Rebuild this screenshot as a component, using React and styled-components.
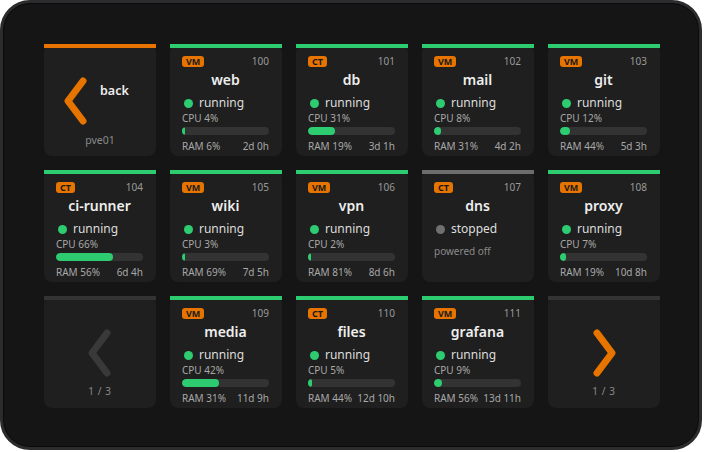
import React from 'react'
import styled, { createGlobalStyle } from 'styled-components'

const Global = createGlobalStyle`
  html, body { margin: 0; padding: 0; background: #ffffff; }
  body { font-family: "Noto Sans", "Open Sans", sans-serif; }
`

const GREEN = '#2ecc71'
const ORANGE = '#e87400'

const Frame = styled.div`
  box-sizing: border-box;
  width: 702px;
  height: 450px;
  border: 3px solid #2c2c2e;
  border-radius: 30px;
  background: #151516;
  box-shadow: inset 0 0 0 1px #0b0b0b;
  padding: 41px 0 0 41px;
`

const Grid = styled.div`
  display: grid;
  grid-template-columns: repeat(5, 112px);
  grid-auto-rows: 112px;
  gap: 14px;
`

const Tile = styled.div`
  background: #1f1f1f;
  border-radius: 8px;
  display: flex;
  flex-direction: column;
`

const Bar = styled.div`
  height: 4px;
  flex: none;
  background: ${p => p.$color};
`

const Body = styled.div`
  flex: 1;
  display: flex;
  flex-direction: column;
  padding: 7px 13px 0 12px;
`

const Head = styled.div`
  display: flex;
  justify-content: space-between;
  align-items: center;
  height: 12px;
`

const Badge = styled.span`
  background: ${ORANGE};
  color: #1a1a1a;
  font-size: 9px;
  font-weight: 700;
  line-height: 11px;
  padding: 0 4px;
  border-radius: 3px;
`

const Vmid = styled.span`
  color: #9a9a9a;
  font-size: 10px;
`

const Name = styled.div`
  margin-top: 4px;
  text-align: center;
  color: #eeeeee;
  font-size: 14px;
  font-weight: 600;
  line-height: 18px;
`

const Status = styled.div`
  margin-top: 6px;
  display: flex;
  align-items: center;
  gap: 6px;
  padding-left: 2px;
  color: #dddddd;
  font-size: 12px;
  line-height: 16px;
`

const Dot = styled.span`
  width: 9px;
  height: 9px;
  border-radius: 50%;
  background: ${p => p.$color};
`

const Small = styled.div`
  color: #a8a8a8;
  font-size: 10px;
  line-height: 12px;
`

const CpuLabel = styled(Small)`
  margin-top: 1px;
`

const Off = styled(Small)`
  margin-top: 8px;
  color: #8a8a8a;
`

const Track = styled.div`
  margin-top: 3px;
  height: 8px;
  border-radius: 4px;
  background: #333333;
  overflow: hidden;
`

const Fill = styled.div`
  height: 100%;
  min-width: 3px;
  border-radius: 4px;
  background: ${GREEN};
`

const Foot = styled(Small)`
  margin-top: 5px;
  display: flex;
  justify-content: space-between;
`

const NavBody = styled.div`
  flex: 1;
  display: flex;
  flex-direction: column;
  align-items: center;
  padding-top: 29px;
`

const NavLabel = styled.div`
  margin-top: 7px;
  color: #8a8a8a;
  font-size: 10px;
  line-height: 14px;
  letter-spacing: 0.6px;
`

const BackRow = styled.div`
  display: flex;
  align-items: flex-start;
  gap: 10px;
  padding: 29px 0 0 18px;
`

const BackText = styled.div`
  margin-top: 5px;
  color: #eeeeee;
  font-size: 12.5px;
  font-weight: 600;
  line-height: 17px;
`

const Node = styled.div`
  margin-top: 8px;
  text-align: center;
  color: #8a8a8a;
  font-size: 10.5px;
  line-height: 14px;
`

function Chevron({ dir, color }) {
  const d = dir === 'left' ? 'M21 4 L6 24 L21 44' : 'M7 4 L22 24 L7 44'
  return (
    <svg width="28" height="48" viewBox="0 0 28 48">
      <path d={d} fill="none" stroke={color} strokeWidth="7" strokeLinecap="round" strokeLinejoin="round" />
    </svg>
  )
}

const guests = [
  { type: 'VM', id: 100, name: 'web', cpu: 4, ram: 6, up: '2d 0h' },
  { type: 'CT', id: 101, name: 'db', cpu: 31, ram: 19, up: '3d 1h' },
  { type: 'VM', id: 102, name: 'mail', cpu: 8, ram: 31, up: '4d 2h' },
  { type: 'VM', id: 103, name: 'git', cpu: 12, ram: 44, up: '5d 3h' },
  { type: 'CT', id: 104, name: 'ci-runner', cpu: 66, ram: 56, up: '6d 4h' },
  { type: 'VM', id: 105, name: 'wiki', cpu: 3, ram: 69, up: '7d 5h' },
  { type: 'VM', id: 106, name: 'vpn', cpu: 2, ram: 81, up: '8d 6h' },
  { type: 'CT', id: 107, name: 'dns', stopped: true },
  { type: 'VM', id: 108, name: 'proxy', cpu: 7, ram: 19, up: '10d 8h' },
  { type: 'VM', id: 109, name: 'media', cpu: 42, ram: 31, up: '11d 9h' },
  { type: 'CT', id: 110, name: 'files', cpu: 5, ram: 44, up: '12d 10h' },
  { type: 'VM', id: 111, name: 'grafana', cpu: 9, ram: 56, up: '13d 11h' },
]

function Guest({ g }) {
  return (
    <Tile>
      <Bar $color={g.stopped ? '#6c6c6c' : GREEN} />
      <Body>
        <Head>
          <Badge>{g.type}</Badge>
          <Vmid>{g.id}</Vmid>
        </Head>
        <Name>{g.name}</Name>
        <Status>
          <Dot $color={g.stopped ? '#707070' : GREEN} />
          {g.stopped ? 'stopped' : 'running'}
        </Status>
        {g.stopped ? (
          <Off>powered off</Off>
        ) : (
          <>
            <CpuLabel>CPU {g.cpu}%</CpuLabel>
            <Track>
              <Fill style={{ width: g.cpu + '%' }} />
            </Track>
            <Foot>
              <span>RAM {g.ram}%</span>
              <span>{g.up}</span>
            </Foot>
          </>
        )}
      </Body>
    </Tile>
  )
}

function Nav({ dir, active }) {
  return (
    <Tile>
      <Bar $color="#333333" />
      <NavBody>
        <Chevron dir={dir} color={active ? ORANGE : '#393939'} />
        <NavLabel>1 / 3</NavLabel>
      </NavBody>
    </Tile>
  )
}

export default function App() {
  return (
    <>
      <Global />
      <Frame>
        <Grid>
          <Tile>
            <Bar $color={ORANGE} />
            <BackRow>
              <Chevron dir="left" color={ORANGE} />
              <BackText>back</BackText>
            </BackRow>
            <Node>pve01</Node>
          </Tile>
          {guests.slice(0, 9).map(g => <Guest key={g.id} g={g} />)}
          <Nav dir="left" />
          {guests.slice(9).map(g => <Guest key={g.id} g={g} />)}
          <Nav dir="right" active />
        </Grid>
      </Frame>
    </>
  )
}
